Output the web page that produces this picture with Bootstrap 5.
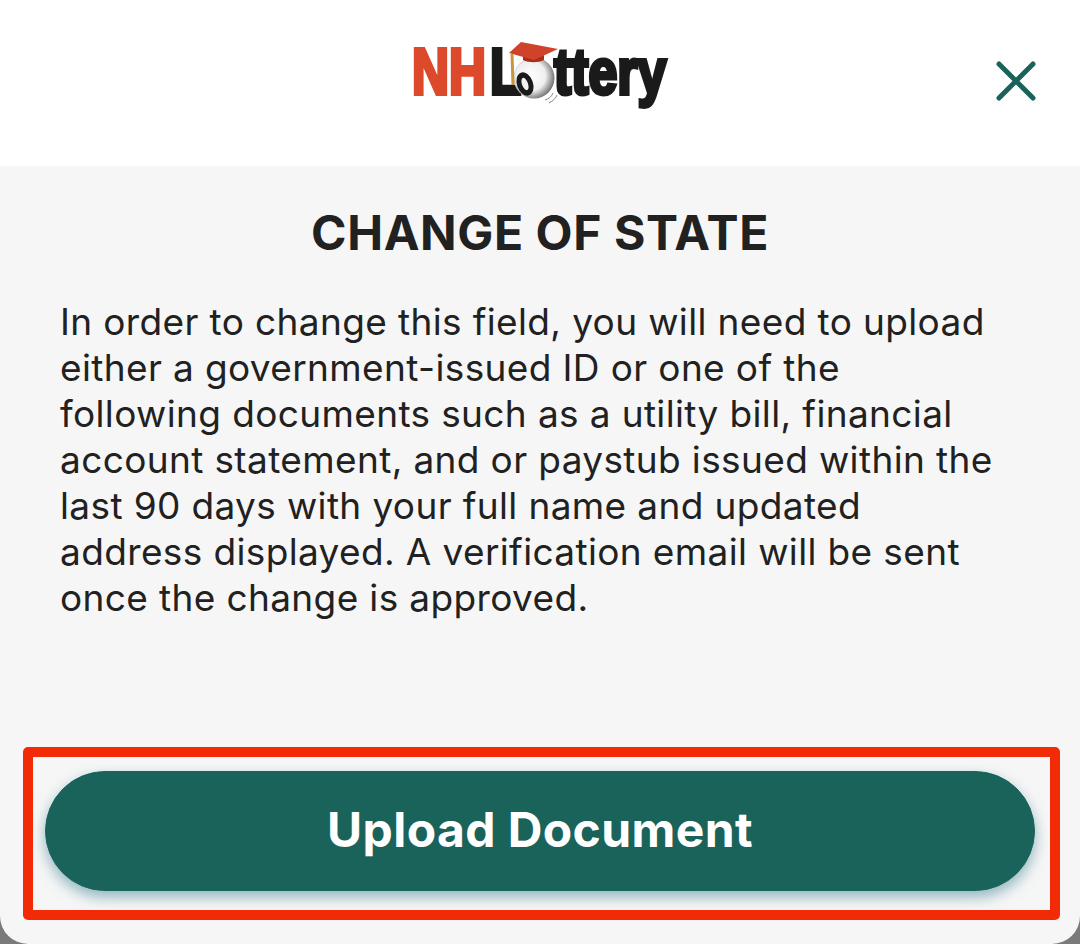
<!DOCTYPE html>
<html lang="en">
<head>
    <meta charset="UTF-8">
    <meta name="viewport" content="width=device-width, initial-scale=1.0">
    <title>Change of State</title>
    <link href="https://cdn.jsdelivr.net/npm/bootstrap@5.3.0/dist/css/bootstrap.min.css" rel="stylesheet">
    <style>
        html, body {
            height: 100%;
        }
        body {
            background-color: #7a7a7a;
            font-family: "Inter", "Liberation Sans", sans-serif;
            color: #212121;
        }
        .sheet {
            height: 944px;
            background-color: #f6f6f6;
            border-radius: 0 0 28px 28px;
            overflow: hidden;
        }
        .sheet-head {
            height: 166px;
            padding-left: 995px;
            padding-bottom: 5px;
        }
        .logo-art {
            position: absolute;
            left: 400px;
            top: 20px;
        }
        .logo-word {
            font-family: "Liberation Sans", sans-serif;
            font-weight: 700;
            font-size: 64px;
            stroke-width: 4px;
        }
        .close-x {
            width: 42px;
            height: 42px;
        }
        .sheet-title {
            font-size: 48px;
            font-weight: 700;
            letter-spacing: .6px;
            line-height: 56px;
            margin-top: 39px;
            margin-bottom: 38px;
            color: #212121;
        }
        .sheet-text {
            font-size: 37px;
            letter-spacing: .37px;
            line-height: 46px;
            padding: 0 20px 0 60px;
            margin: 0;
        }
        .mark-box {
            margin: 0 20px 24px 23px;
            border: 10px solid #f22b06;
            border-radius: 5px;
            padding: 14px 15px 19px 12px;
        }
        .upload-btn {
            height: 120px;
            font-size: 48px;
            font-weight: 700;
            letter-spacing: .4px;
            padding-bottom: 8px;
            background-color: #1a635b;
            border-color: #1a635b;
            color: #fff;
            box-shadow: 0 6px 14px rgba(60, 130, 145, .55);
        }
    </style>
</head>
<body>
    <div class="sheet d-flex flex-column position-relative">
        <div class="sheet-head bg-white d-flex align-items-center">
            <svg class="logo-art" width="280" height="120" viewBox="400 20 280 120">
                <defs>
                    <radialGradient id="ballFill" cx="0.42" cy="0.45" r="0.6">
                        <stop offset="0" stop-color="#ffffff"/>
                        <stop offset="0.6" stop-color="#efefef"/>
                        <stop offset="1" stop-color="#6a6a6a"/>
                    </radialGradient>
                </defs>
                <text class="logo-word" transform="translate(412 94) scale(.8 1)" fill="#dc4a2b" stroke="#dc4a2b">NH</text>
                <text class="logo-word" transform="translate(490 94) scale(.8 1)" fill="#1a1a1a" stroke="#1a1a1a">L</text>
                <text class="logo-word" transform="translate(554 94) scale(.81 1)" fill="#1a1a1a" stroke="#1a1a1a">ttery</text>
                <circle cx="534" cy="78" r="20.5" fill="url(#ballFill)"/>
                <ellipse cx="525" cy="84" rx="8" ry="12" transform="rotate(-20 525 84)" fill="#1a1a1a"/>
                <ellipse cx="525" cy="84" rx="3" ry="6.5" transform="rotate(-20 525 84)" fill="#f2f2f2"/>
                <path d="M545 100 C549 99 552 96 553 93 M549 103 C553 101 556 98 557 95" stroke="#8a8a8a" stroke-width="1" fill="none"/>
                <path d="M523 52 L544 52 L544 60 C538 63 529 63 523 60 Z" fill="#a5301a"/>
                <path d="M509 53 L521 42 L558 49 L534 60 Z" fill="#d0432a"/>
                <path d="M512 54 L513 85" stroke="#c8963c" stroke-width="3" fill="none"/>
            </svg>
            <svg class="close-x" viewBox="0 0 42 42">
                <path d="M4 4 L38 38 M38 4 L4 38" stroke="#1a635b" stroke-width="5" stroke-linecap="round" fill="none"/>
            </svg>
        </div>
        <h1 class="sheet-title text-center">CHANGE OF STATE</h1>
        <p class="sheet-text flex-grow-1">In order to change this field, you will need to upload<br>either a government-issued ID or one of the<br>following documents such as a utility bill, financial<br>account statement, and or paystub issued within the<br>last 90 days with your full name and updated<br>address displayed. A verification email will be sent<br>once the change is approved.</p>
        <div class="mark-box">
            <button type="button" class="btn upload-btn rounded-pill w-100 d-block">Upload Document</button>
        </div>
    </div>
    <script src="https://cdn.jsdelivr.net/npm/bootstrap@5.3.0/dist/js/bootstrap.bundle.min.js"></script>
</body>
</html>
